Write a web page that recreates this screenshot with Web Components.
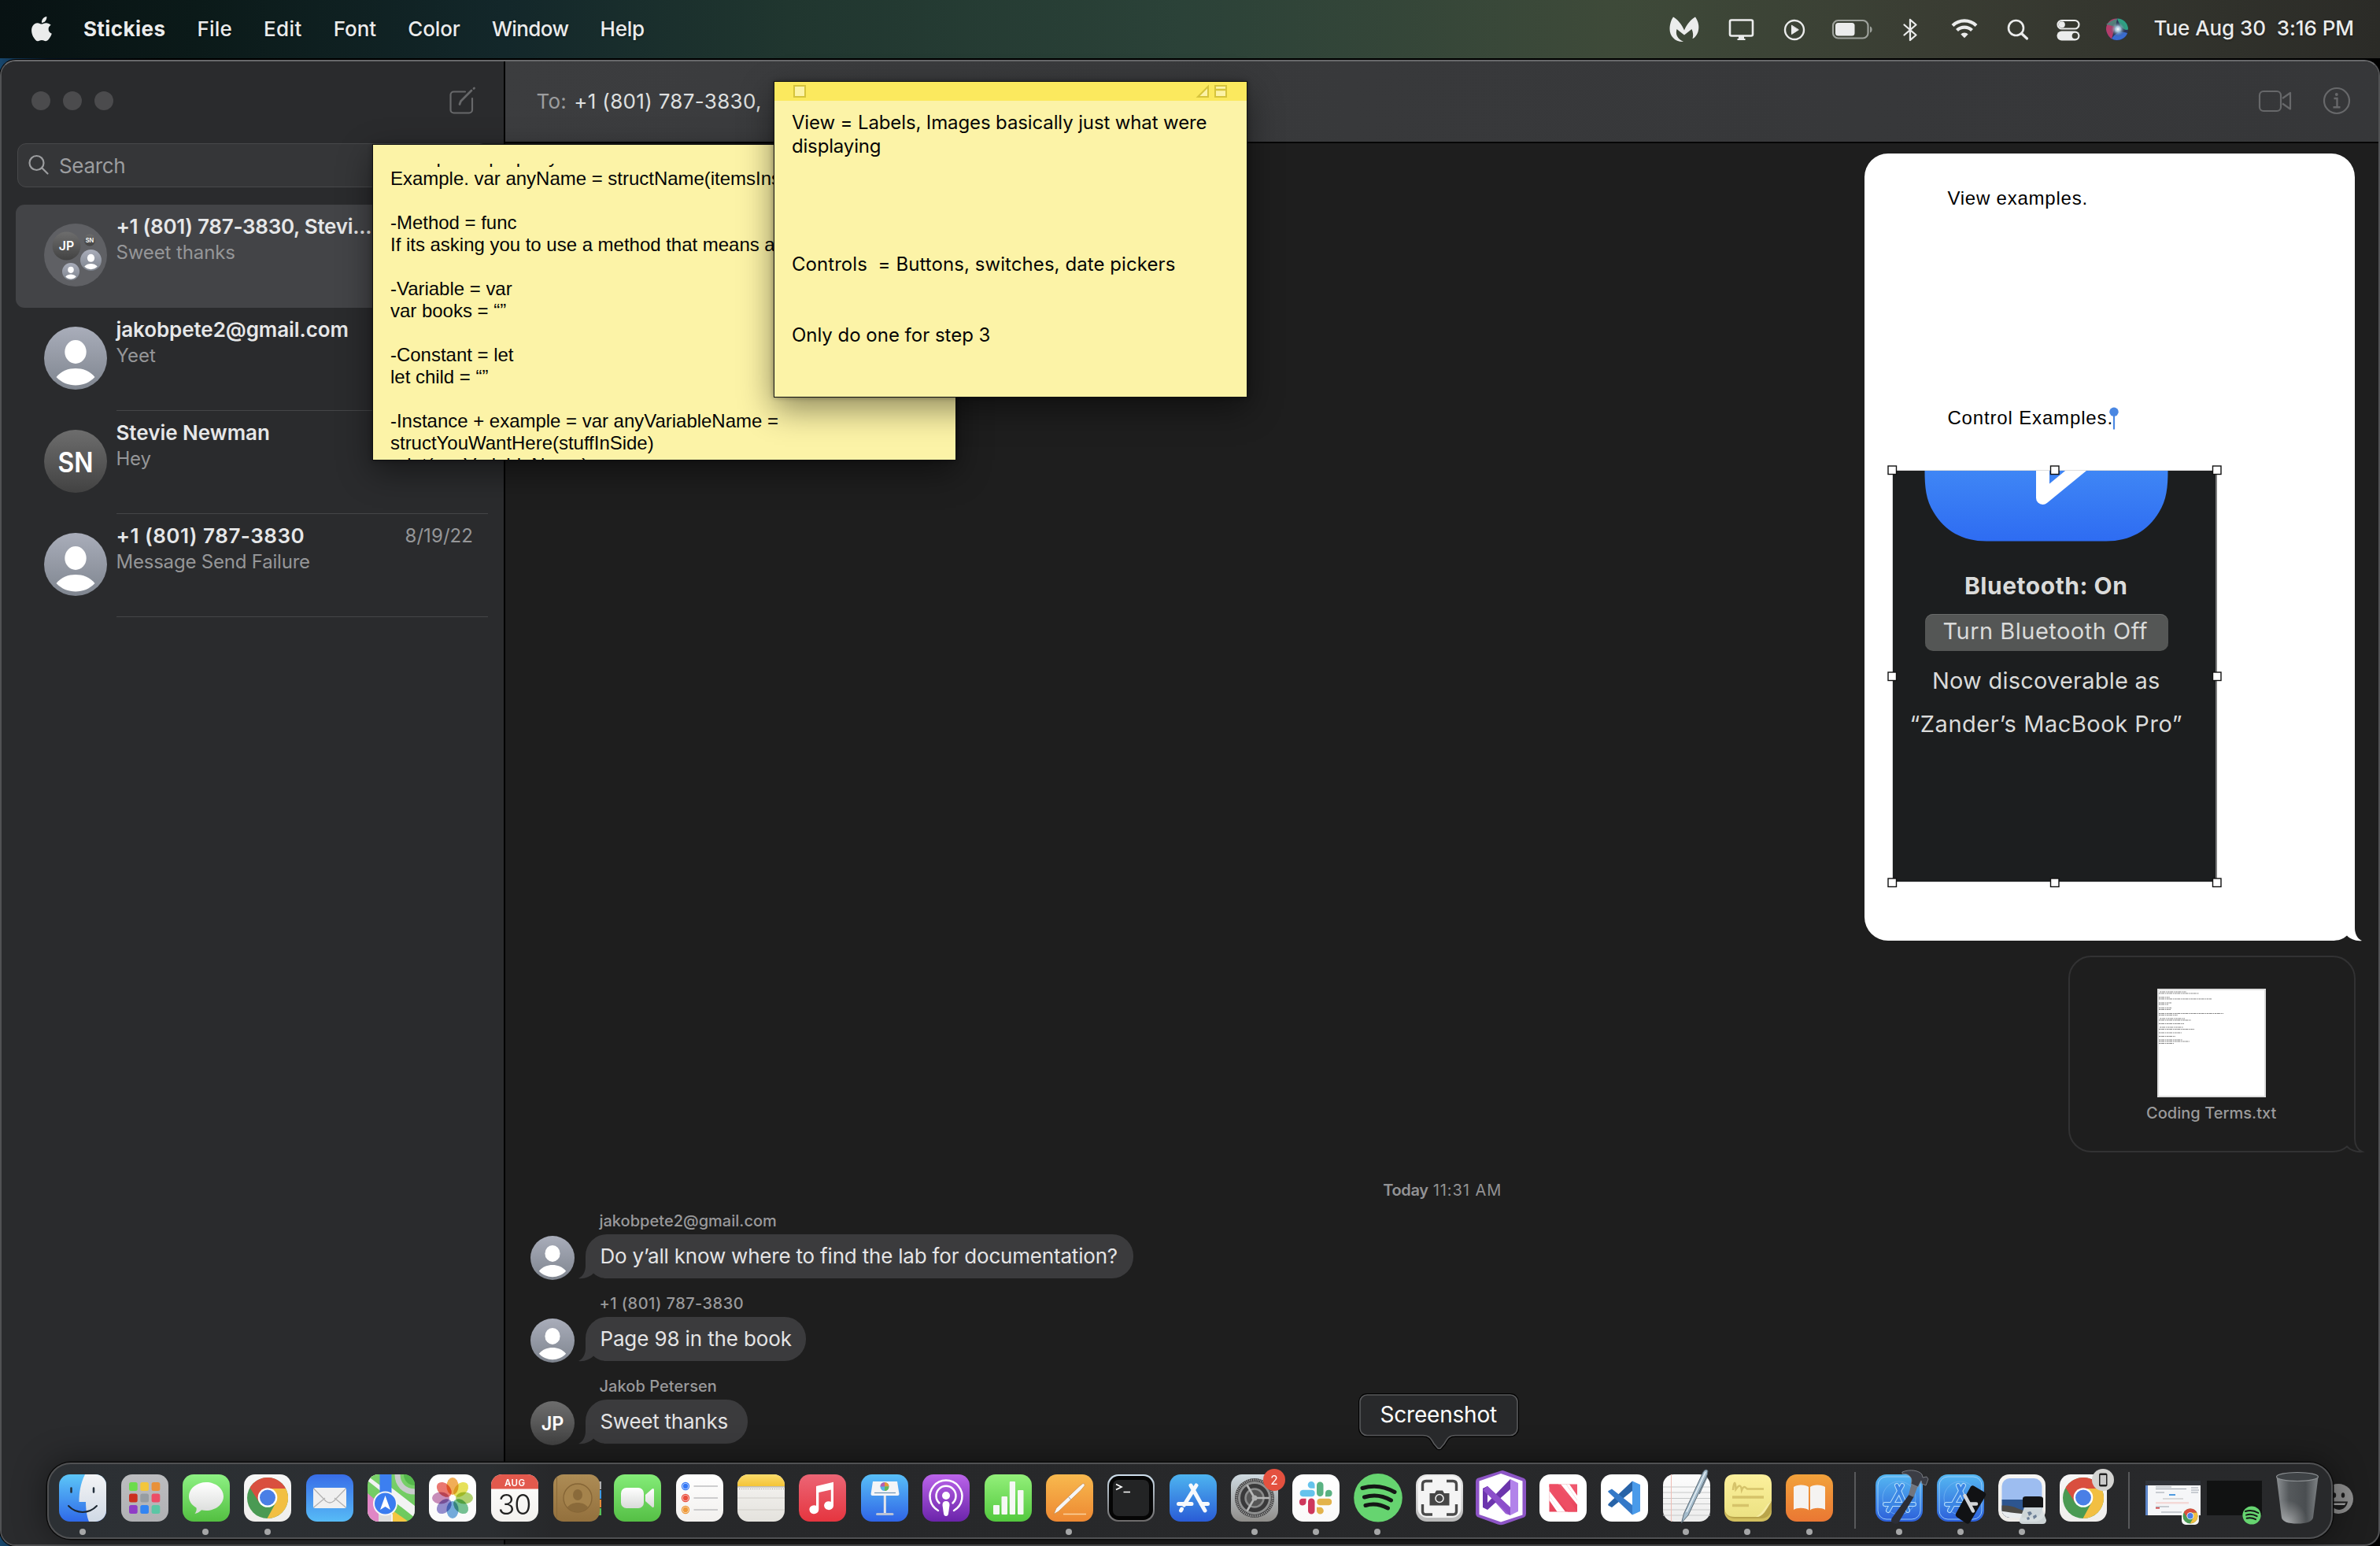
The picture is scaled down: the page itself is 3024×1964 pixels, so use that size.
<!DOCTYPE html>
<html lang="en">
<head>
<meta charset="utf-8">
<title>Desktop</title>
<style>
html,body{margin:0;padding:0;background:#000}
body{width:3024px;height:1964px;overflow:hidden;font-family:Inter,"Liberation Sans",sans-serif;-webkit-font-smoothing:antialiased}
</style>
</head>
<body>
<mac-desktop>
  <menu-bar slot="menubar"></menu-bar>
  <messages-window slot="window">
    <chat-sidebar slot="sidebar">
      <chat-cell kind="group" w="322" selected title-text="+1 (801) 787-3830, Stevi..." sub="Sweet thanks" sw="149"></chat-cell>
      <chat-cell kind="person" w="293" title-text="jakobpete2@gmail.com" sub="Yeet" sw="48"></chat-cell>
      <chat-cell kind="SN" w="193" title-text="Stevie Newman" sub="Hey" sw="42"></chat-cell>
      <chat-cell kind="person" w="237" title-text="+1 (801) 787-3830" sub="Message Send Failure" sw="244" date="8/19/22"></chat-cell>
    </chat-sidebar>
    <chat-toolbar slot="toolbar"></chat-toolbar>
    <chat-bubble slot="chat" class="doc" w="623" h="1000" r="30" side="right" fill="#fff"><doc-shot></doc-shot></chat-bubble>
    <chat-bubble slot="chat" class="file" w="363" h="248" r="28" side="right" fill="none" line="#323233"><file-card></file-card></chat-bubble>
    <time-stamp slot="chat"></time-stamp>
    <chat-message slot="chat" from="jakobpete2@gmail.com" fw="223" kind="person" w="696" tw="655">Do y’all know where to find the lab for documentation?</chat-message>
    <chat-message slot="chat" from="+1 (801) 787-3830" fw="181" kind="person" w="280" tw="241">Page 98 in the book</chat-message>
    <chat-message slot="chat" from="Jakob Petersen" fw="147" kind="JP" w="206" tw="160">Sweet thanks</chat-message>
  </messages-window>
  <sticky-note slot="over" class="back"><div class="lines"><div>-Computed property = Var or let</div><div>Example. var anyName = structName(itemsInside)</div><br><div>-Method = func</div><div>If its asking you to use a method that means a</div><br><div>-Variable = var</div><div>var books = “”</div><br><div>-Constant = let</div><div>let child = “”</div><br><div>-Instance + example = var anyVariableName =</div><div>structYouWantHere(stuffInSide)</div><div>print(anyVariableName)</div></div></sticky-note>
  <sticky-note slot="over" class="front" bar><fit-text w="525">View = Labels, Images basically just what were</fit-text><fit-text w="111">displaying</fit-text><p></p><p></p><p></p><p></p><fit-text w="485">Controls  = Buttons, switches, date pickers</fit-text><p></p><p></p><fit-text w="250">Only do one for step 3</fit-text></sticky-note>
  <hover-label slot="over">Screenshot</hover-label>
  <mac-dock slot="over"></mac-dock>
</mac-desktop>

<script>
const BASE = `:host,*{box-sizing:border-box}svg{display:block;flex:none;overflow:visible}`;
const make = (name, html, after) => customElements.define(name, class extends HTMLElement {
  connectedCallback() {
    if (this.shadowRoot) return;
    const root = this.attachShadow({mode: 'open'});
    root.innerHTML = typeof html === 'function' ? html(this) : html;
    if (after) after(this, root);
  }
});
const at = (el, n) => el.getAttribute(n);

/* Text run whose tracking is tuned so that it fills a given width */
const runs = [];
const fitRun = el => {
  const n = [...el.textContent].length, nat = el.getBoundingClientRect().width;
  el.style.letterSpacing = ((+at(el, 'w') + 2.5 - nat) / n).toFixed(3) + 'px';
};
make('fit-text', `<style>:host{display:block;width:max-content;white-space:pre;flex:none;margin-left:-.6px}</style><slot></slot>`, el => runs.push(el));

const person = `<defs><linearGradient id="p" x2="0" y2="1"><stop stop-color="#a9adba"/><stop offset="1" stop-color="#7f858f"/></linearGradient></defs><circle cx="40" cy="40" r="40" fill="url(#p)"/><ellipse cx="40" cy="32" rx="13.7" ry="15" fill="#fff"/><path d="M15.5 64C22 56 31 53 40 53S58 56 64.5 64C58 71 49 74.5 40 74.5S22 71 15.5 64Z" fill="#fff"/>`;
const mono = (t, fs, tl, y, id='m') => `<defs><linearGradient id="${id}" x2="0" y2="1"><stop stop-color="#6d6d6d"/><stop offset="1" stop-color="#424242"/></linearGradient></defs><circle cx="40" cy="40" r="40" fill="url(#${id})"/><text x="40" y="${y}" text-anchor="middle" font-size="${fs}" font-weight="600" fill="#fff" textLength="${tl}" lengthAdjust="spacingAndGlyphs">${t}</text>`;
make('user-avatar', el => {
  const k = at(el, 'kind'), s = at(el, 'size');
  const body = k === 'person' ? person
    : k === 'group' ? `<circle cx="40" cy="40" r="40" fill="#5f6064"/>
      <g transform="translate(10.5 10.5) scale(.45)">${mono('JP', 36, 43, 53)}</g>
      <g transform="translate(50.5 13.5) scale(.1875)">${mono('SN', 42, 56, 55, 'm2')}</g>
      <g transform="translate(46 33) scale(.3375)">${person}</g><g transform="translate(23 50) scale(.275)">${person}</g>`
    : k === 'SN' ? mono('SN', 35, 45, 54) : mono('JP', 34, 41, 53.5);
  return `<style>${BASE}:host{display:block;flex:none}</style><svg width="${s}" height="${s}" viewBox="0 0 80 80">${body}</svg>`;
});

make('mac-desktop', `<style>${BASE}:host{display:flex;flex-direction:column;position:relative;width:3024px;height:1964px;overflow:hidden;background:linear-gradient(90deg,#17466c 0,#061422 60px,#000 200px)}</style>
<slot name="menubar"></slot><slot name="window"></slot><slot name="over"></slot>`);

/* Menu bar */
const ic = (x, w, ml, body) => `<svg style="margin-left:${ml}px" width="${w}" height="38" viewBox="${x} 18 ${w} 38" fill="none" stroke-linecap="round" stroke-linejoin="round">${body}</svg>`;
make('menu-bar', `<style>${BASE}
:host{display:flex;align-items:center;height:74px;margin-bottom:2px;flex:none;padding:0 33px 0 39px;color:#ebecec;font-size:26px;line-height:32px;
background:linear-gradient(90deg,#081213 0,#0b1a19 250px,#13272a 640px,#20362f 1000px,#2b4238 1500px,#3e4a39 2050px,#3a3d33 2450px,#2b2b27 3024px);text-shadow:0 1px 3px #0006}
b{font-weight:700}.m{display:flex;gap:40.700px;margin-left:39.500px;margin-top:-1px;font-weight:500}.s{flex:1}.t{font-weight:500;margin:-2px 0 0 32px}</style>
<svg width="28" height="34" viewBox="39 18 28 34" fill="#ebecec"><path d="M59.3 19c.3 2.300-.5 4.200-1.700 5.700-1.200 1.400-3 2.300-4.600 2.200-.3-2.100.6-4.100 1.700-5.400C55.900 20.100 57.800 19.200 59.300 19zM64.700 29.700c-2 1.200-3.100 2.900-3.100 5.200 0 2.700 1.500 4.700 4.200 5.800-.7 2.100-1.600 3.900-2.800 5.600-1.400 2-2.700 3.900-4.900 3.900-2.100 0-2.700-1.200-5-1.200s-3 1.200-5 1.300c-2.100.1-3.500-2-4.900-4-2.700-4-4.500-10.600-1.700-15.300 1.300-2.300 3.700-3.700 6.200-3.800 2.100 0 3.800 1.400 5.100 1.400 1.200 0 3.500-1.600 6-1.400 1.900.1 4.200.8 5.900 2.500z"/></svg>
<div class="m"><b><fit-text w="102">Stickies</fit-text></b><fit-text w="42">File</fit-text><fit-text w="46">Edit</fit-text><fit-text w="52">Font</fit-text><fit-text w="64">Color</fit-text><fit-text w="95">Window</fit-text><fit-text w="54">Help</fit-text></div>
<div class="s"></div>
${ic(2121,38,0,`<path fill="#ebecec" d="M2126 21.500C2131 24 2137 31 2140 38.500C2143 31 2149 24 2154 21.500C2158 27 2159.500 34 2157.500 40.500C2155.500 46.500 2151.500 49 2150.500 49C2151.500 46 2151.500 41 2149.500 37L2140 44.500L2130.500 37C2128.500 44 2131.500 49.500 2139 53C2128 53.500 2121.500 45.500 2121.500 37C2121.500 31 2123.500 25 2126 21.500Z"/>`)}
${ic(2196,33,37,`<rect x="2198" y="25.500" width="29" height="20" rx="2" stroke="#ebecec" stroke-width="2.600"/><path d="M2209 46h7v3h1.500v2h-10v-2h1.500z" fill="#ebecec"/>`)}
${ic(2266,28,37,`<circle cx="2280" cy="38" r="12" stroke="#ebecec" stroke-width="2.400"/><path d="M2276.500 32.500v11l8.500-5.500z" fill="#ebecec" stroke="#ebecec"/>`)}
${ic(2327,53,33,`<rect x="2329" y="26" width="44.500" height="22.500" rx="6.500" stroke="#9da19b" stroke-width="2.200"/><path d="M2376 33.500c3.500 1 3.500 7 0 8z" fill="#9da19b"/><rect x="2332" y="29" width="24.500" height="16.500" rx="3.500" fill="#ebecec"/>`)}
${ic(2417,20,37,`<path d="M2419.500 31.500L2434.500 44.500L2427 51V25L2434.500 31.500L2419.500 44.500" stroke="#ebecec" stroke-width="2.300"/>`)}
${ic(2478,36,41,`<path d="M2481 32.500a21.500 21.500 0 0 1 30 0M2486.500 38.500a13.500 13.500 0 0 1 19 0" stroke="#ebecec" stroke-width="4.200" stroke-linecap="butt"/><path d="M2496 48.300l-4.700-4.900a6.700 6.700 0 0 1 9.400 0z" fill="#ebecec"/>`)}
${ic(2550,28,36,`<circle cx="2561.500" cy="35.500" r="9.500" stroke="#ebecec" stroke-width="2.600"/><path d="M2568.500 42.500L2575.500 49" stroke="#ebecec" stroke-width="3.200"/>`)}
${ic(2612,31,34,`<rect x="2614.500" y="26" width="27" height="10.500" rx="5.250" stroke="#ebecec" stroke-width="2.200"/><circle cx="2619.800" cy="31.200" r="4" fill="#ebecec"/><rect x="2613.500" y="39.500" width="29" height="12" rx="6" fill="#ebecec"/><circle cx="2636.500" cy="45.500" r="3.800" fill="#3b3d34"/>`)}
${ic(2675,30,32,`<defs><radialGradient id="a"><stop stop-color="#fff"/><stop offset=".35" stop-color="#bfe2f5" stop-opacity=".8"/><stop offset="1" stop-color="#345" stop-opacity="0"/></radialGradient></defs><circle cx="2690" cy="37.500" r="14" fill="#2a3557"/><path d="M2690 23.500a14 14 0 0 1 14 14c-5 2-10-3-14-14z" fill="#2fa083"/><path d="M2690 23.500c-9 0-14 6-14 14 1 7 5 10 7 12 3-8 3-15 7-26z" fill="#b43d6a"/><path d="M2683 49c5 4 17 2 20-7-7-3-14-2-20 7z" fill="#3a6cd0"/><path d="M2676 31q8-6 14-7l-2 10z" fill="#547f7a"/><circle cx="2691" cy="37" r="10" fill="url(#a)"/>`)}
<fit-text class="t" w="252">Tue Aug 30  3:16 PM</fit-text>`);

/* Messages window */
make('messages-window', `<style>${BASE}
:host{display:flex;flex:1;min-height:0;border:2px solid #515254;border-top-color:#68696b;border-radius:20px;overflow:hidden;background:#1e1e1e;box-shadow:0 0 0 1px #000}
.main{flex:1;display:flex;flex-direction:column;border-left:2px solid #000}
.chat{flex:1;display:flex;flex-direction:column;padding:13px 0 0 32px}
::slotted(.doc){align-self:flex-end;margin-right:30px}
::slotted(.file){align-self:flex-end;margin:20px 30.500px 0 0}
</style><slot name="sidebar"></slot><div class="main"><slot name="toolbar"></slot><div class="chat"><slot name="chat"></slot></div></div>`);

make('chat-sidebar', `<style>${BASE}
:host{display:flex;flex-direction:column;width:638px;background:#2a2b2d;flex:none}
.h{display:flex;align-items:center;height:104px;padding:0 35px 4px 38px;gap:16px}i{width:24px;height:24px;border-radius:50%;background:#4b4b4d}.sp{flex:1}
.q{display:flex;align-items:center;height:56px;margin:0 20px 22px 20px;padding:0 15px 0 13px;border:1.500px solid #48494b;border-radius:11px;background:#353638;color:#9c9d9f;font-size:26px;gap:13.500px}
.q fit-text{margin-top:1px}
</style><div class="h"><i></i><i></i><i></i><div class="sp"></div><svg width="34" height="34" viewBox="571 109 34 34" fill="none" stroke="#67686a" stroke-width="2.200" stroke-linecap="round"><path d="M591 114.500H576.500a4 4 0 0 0-4 4v19a4 4 0 0 0 4 4H596a4 4 0 0 0 4-4V123"/><path d="M584 130.500l1.500-4 13.500-13.500M602 110.500l.5-.5" stroke-width="2.800"/></svg></div>
<div class="q"><svg width="26" height="28" viewBox="37 197 26 28" fill="none" stroke="#9c9d9f" stroke-width="2.200" stroke-linecap="round"><circle cx="47.500" cy="208" r="9"/><path d="M54.500 214.500L61.500 221.500"/></svg><fit-text w="82">Search</fit-text></div><slot></slot>`);

make('chat-cell', el => `<style>${BASE}
:host{display:block;height:131px;margin:0 20px 0 18px}
.c{display:flex;height:131px;padding:0 0 0 36px;gap:12px;border-radius:11px;${el.hasAttribute('selected') ? 'background:#434447' : ''}}
user-avatar{margin-top:24px}.b{flex:1;padding-top:12px;position:relative;line-height:32px;${el.hasAttribute('selected') ? '' : 'border-bottom:1.500px solid #444547'}}
.r{display:flex;justify-content:space-between;padding-right:19px;color:#e6e7e8;font-size:26px;font-weight:600}
.s,.d{color:#959698;font-size:24px;font-weight:400}.s{padding-top:1px}</style>
<div class="c"><user-avatar kind="${at(el,'kind')}" size="80"></user-avatar><div class="b"><div class="r"><fit-text w="${at(el,'w')}">${at(el,'title-text')}</fit-text>${at(el,'date') ? `<fit-text class="d" w="84">${at(el,'date')}</fit-text>` : ''}</div><div class="s"><fit-text w="${at(el,'sw')}">${at(el,'sub')}</fit-text></div></div></div>`);

make('chat-toolbar', `<style>${BASE}
:host{display:flex;align-items:center;height:104px;flex:none;background:linear-gradient(90deg,#3c3d3f,#38393b 45%,#363739);border-bottom:2px solid #060606;padding:0 35px 2px 40px;font-size:26px;color:#dfe0e0;line-height:32px}
span{color:#9c9d9e;margin-right:10px}.sp{flex:1}svg{margin-left:40px}fit-text{padding-top:2px}</style>
<span><fit-text w="36">To:</fit-text></span><fit-text w="236">+1 (801) 787-3830,</fit-text><div class="sp"></div>
<svg width="42" height="34" viewBox="2870 111 42 34" fill="none" stroke="#67686a" stroke-width="2.200" stroke-linejoin="round"><rect x="2872" y="116" width="27" height="25" rx="5"/><path d="M2901 125L2911 118V138.500L2901 131.500"/></svg>
<svg width="36" height="36" viewBox="2951.500 110 36 36" fill="none" stroke="#67686a" stroke-width="2.200"><circle cx="2969.500" cy="128" r="16"/><path d="M2966 125h4v11M2965 136.300h9" stroke-width="2.400"/><circle cx="2969.300" cy="120" r="2" fill="#67686a" stroke="none"/></svg>`);

/* Speech bubble outline with a tail on one side */
const bubble = (w, h, r) => `M${r} 0H${w-r}A${r} ${r} 0 0 1 ${w} ${r}V${h-16}C${w} ${h-8} ${w+4} ${h-2} ${w+9} ${h}C${w+2} ${h+1} ${w-6} ${h-2} ${w-10} ${h-6.5}C${w-15} ${h-2} ${w-20} ${h} ${w-r} ${h}H${r}A${r} ${r} 0 0 1 0 ${h-r}V${r}A${r} ${r} 0 0 1 ${r} 0Z`;
make('chat-bubble', el => {
  const w = +at(el,'w'), h = +at(el,'h'), r = +at(el,'r'), line = at(el,'line');
  return `<style>${BASE}:host{display:block;position:relative;width:${w}px;height:${h}px;flex:none}.bg{position:absolute;left:0;top:0}.in{position:relative;height:100%}</style>
  <svg class="bg" width="${w}" height="${h}"><path d="${bubble(w,h,r)}" fill="${at(el,'fill')}" ${line ? `stroke="${line}" stroke-width="2"` : ''} ${at(el,'side') === 'left' ? `transform="translate(${w} 0) scale(-1 1)"` : ''}/></svg><div class="in"><slot></slot></div>`;
});

const handle = (x, y) => `<rect x="${x-5}" y="${y-5}" width="10.500" height="10.500" fill="#fff" stroke="#111" stroke-width="1.400"/>`;
make('doc-shot', `<style>${BASE}
:host{display:block;padding-top:42.500px;color:#000;font:24px/28px "Liberation Sans",sans-serif}
.l{margin-left:106px;display:flex}.two{margin-top:251px}
.shot{position:relative;display:flex;flex-direction:column;align-items:center;width:413px;height:524px;margin:50px 0 0 35px;background:#1c1e1f;color:#dadbda;font:29px/36px Inter,sans-serif;padding-right:21px}
.shot svg{position:absolute;left:0;top:0}.pin{margin-left:-5px;margin-top:0}
.a{margin-top:129px;font-weight:700;font-size:30px}.btn{display:flex;align-items:center;justify-content:center;width:309px;height:47px;margin:18px 0 0 1px;border-radius:10px;background:#545655;box-shadow:inset 0 1px #686a69;padding:0 3px 2px 0}
.b{margin-top:20px}.c{margin-top:19.500px}</style>
<div class="l"><fit-text w="176">View examples.</fit-text></div>
<div class="l two"><fit-text w="208">Control Examples.</fit-text><svg class="pin" width="12" height="30" viewBox="0 0 12 30"><path d="M6 5V28.500" stroke="#4a87e2" stroke-width="2.200"/><circle cx="6" cy="6.200" r="5.700" fill="#4a87e2"/></svg></div>
<div class="shot"><svg width="412.500" height="524" viewBox="0 0 412.500 524"><defs><linearGradient id="g" x2="0" y2="1"><stop stop-color="#3f86f5"/><stop offset="1" stop-color="#2e6cf2"/></linearGradient><clipPath id="c"><path d="M0 0H412V524H0Z"/></clipPath></defs><path d="M41.500 0H350.500C350.500 22 349 38 339 54C325 77 303 90.500 272 90.500H120C89 90.500 67 77 53 54C43 38 41.500 22 41.500 0Z" fill="url(#g)"/><path clip-path="url(#c)" d="M191.500 -10V35.500L250 -12.500" fill="none" stroke="#fff" stroke-width="17" stroke-linejoin="round"/>
<rect x=".5" y=".5" width="411.500" height="523" fill="none" stroke="#ddd" stroke-width="1"/>${[[0,0],[206.500,0],[412.500,0],[0,262],[412.500,262],[0,524],[206.500,524],[412.500,524]].map(p => handle(...p)).join('')}</svg>
<fit-text class="a" w="205">Bluetooth: On</fit-text><div class="btn"><fit-text w="258">Turn Bluetooth Off</fit-text></div><fit-text class="b" w="287">Now discoverable as</fit-text><fit-text class="c" w="344">“Zander’s MacBook Pro”</fit-text></div>`);

const rows = [[1,34,2],[0,51,4],[0,14,9],[0,67,11],[0,16,16],[0,12,18],[0,16,22.500],[0,15,24.500],[0,82,29.500],[0,24,31.500],[1,32,36],[0,41,38],[0,32,42.500],[1,30,47],[0,45,49.500],[0,29,54],[0,21,58.500],[0,30,63],[0,39,65],[0,19,67.500]];
make('file-card', `<style>${BASE}
:host{display:flex;flex-direction:column;align-items:center;padding:41px 0 0 0;color:#9a9a9b;font-size:20px;line-height:24px;font-weight:500}
.t{width:138px;height:138px;background:#fff;border:2px solid #dedede;margin-bottom:7.500px}</style>
<div class="t"><svg width="134" height="134">${rows.map(([x,w,y]) => `<path d="M${x} ${y}h${w}" stroke="#888" stroke-width="1.100" stroke-dasharray="2.500 .6 4 .8 1.500 .7"/>`).join('')}</svg></div><fit-text w="163">Coding Terms.txt</fit-text>`);

make('time-stamp', `<style>:host{display:flex;justify-content:center;margin:36.500px 0 0 -30px;color:#929294;font-size:20px;line-height:24px;flex:none}b{font-weight:600}</style><b><fit-text w="55">Today</fit-text></b><fit-text w="85" style="margin-left:6px">11:31 AM</fit-text>`);

make('chat-message', el => `<style>${BASE}
:host{display:block;height:105px;flex:none;padding-top:15px}
.f{margin-left:88px;color:#99999b;font-size:20px;line-height:24px;font-weight:500}
.r{display:flex;margin-top:5px;gap:14px;align-items:flex-start}user-avatar{margin-top:2px}
.x{padding:11px 0 0 19px;font-size:26px;line-height:34px;color:#e4e4e5}</style>
<div class="f"><fit-text w="${at(el,'fw')}">${at(el,'from')}</fit-text></div>
<div class="r"><user-avatar kind="${at(el,'kind')}" size="56"></user-avatar><chat-bubble side="left" w="${at(el,'w')}" h="56" r="27" fill="#3b3b3d"><div class="x"><fit-text w="${at(el,'tw')}">${el.textContent}</fit-text></div></chat-bubble></div>`);

/* Sticky notes */
make('sticky-note', el => `<style>${BASE}
:host{position:absolute;display:flex;flex-direction:column;background:#fcf3a7;border:1px solid #111;color:#050505;box-shadow:0 14px 40px #00000073,0 0 6px #0005;overflow:hidden;z-index:1}
:host(.back){left:473px;top:183px;width:742px;height:402px;font:24px/28px "Liberation Sans",sans-serif;padding:24px 0 0 22px}
:host(.front){left:983px;top:103px;width:602px;height:402px;font-size:24px;line-height:30px}
.clip{overflow:hidden;flex:1;min-height:0}.bar{height:24px;background:#fbe95e;display:flex;align-items:center;padding:0 24px;flex:none}.sp{flex:1}
::slotted(.lines){margin-top:-23px;white-space:pre;letter-spacing:-.02px}::slotted(p){margin:0;height:30px}
:host(.front) .clip{padding:13px 0 0 22.500px}</style>
${el.hasAttribute('bar') ? `<div class="bar"><svg width="16" height="16"><rect x="1" y="1" width="14" height="14" fill="#fcf3a7" stroke="#d6c43c" stroke-width="2"/></svg><div class="sp"></div><svg width="40" height="16" fill="#fcf3a7" stroke="#d6c43c" stroke-width="2"><path d="M2 15H15V2Z"/><rect x="24" y="1" width="14" height="14"/><path d="M24 6H38" stroke-width="2.500"/></svg></div>` : ''}<div class="clip"><slot></slot></div>`);

make('hover-label', el => `<style>${BASE}
:host{position:absolute;left:1726px;top:1770px;width:204px;height:71px;z-index:2;display:flex;justify-content:center;color:#fff;font-size:28px;line-height:55px}
svg{position:absolute;left:0;top:0}fit-text{position:relative}</style>
<svg width="204" height="71" viewBox="0 0 202 71" preserveAspectRatio="none"><path d="M11 2H191a9 9 0 0 1 9 9V44.500a9 9 0 0 1-9 9H122C114 53.500 112 57 108 64L103.500 69.500Q101.500 71 99.500 69.500L95 64C91 57 89 53.500 81 53.500H11a9 9 0 0 1-9-9V11a9 9 0 0 1 9-9Z" fill="#28292b" stroke="#000" stroke-width="4"/><path d="M11 2H191a9 9 0 0 1 9 9V44.500a9 9 0 0 1-9 9H122C114 53.500 112 57 108 64L103.500 69.500Q101.500 71 99.500 69.500L95 64C91 57 89 53.500 81 53.500H11a9 9 0 0 1-9-9V11a9 9 0 0 1 9-9Z" fill="#28292b" stroke="#58595b" stroke-width="1.600"/></svg><fit-text w="146">${el.textContent}</fit-text>`);

/* Dock icons, each drawn in a 60 × 60 box */
const lg = (id, a, b) => `<linearGradient id="${id}" x2="0" y2="1"><stop stop-color="${a}"/><stop offset="1" stop-color="${b}"/></linearGradient>`;
const tile = (a, b = a) => `<defs>${lg('t', a, b)}${lg('w', '#fff', '#d9dbd9')}<clipPath id="k"><rect width="60" height="60" rx="14"/></clipPath></defs><rect width="60" height="60" rx="14" fill="url(#t)"/>`;
const chromeDisc = `<circle cx="30" cy="30" r="26" fill="#4a9a53"/><path d="M30 18H53.100A26 26 0 0 1 29.500 56L40.400 36Z" fill="#f2bf42"/><path d="M19.600 36L7.500 17A26 26 0 0 1 53.100 18H30Z" fill="#d94f3f"/><circle cx="30" cy="29.500" r="12.300" fill="#fff"/><circle cx="30" cy="29.500" r="10" fill="#4a7fe6"/>`;
const spot = `<path d="M10 17.500C23 13.500 38 15 51 22.500M12.500 29C24 25.500 36 27 46.500 33M14 39.500C24 36.500 33 38 42.500 43" fill="none" stroke="#141615" stroke-linecap="round"`;
const xgrid = `<rect x="3" y="3" width="54" height="54" rx="11" fill="none" stroke="#9fd2fa" stroke-width=".9"/><circle cx="30" cy="30" r="21" fill="none" stroke="#7fbcf5" stroke-width=".6"/><g fill="none" stroke="#b7defb" stroke-linecap="round" stroke-width="6"><path d="M27 14L41 46M34 14L16 46M12 38H49"/></g><g fill="none" stroke="#3c86e4" stroke-linecap="round" stroke-width="4"><path d="M27 14L41 46M34 14L16 46M12 38H49"/></g>`;
const petals = ['#f0a23b','#e3de40','#a5cc5a','#62ba84','#5f9fd9','#857dc8','#c27bb0','#e8625a'];
const icons = {
finder: `${tile('#5cc6f8','#2f69e8')}<defs>${lg('f','#f3f4f6','#d0d9e5')}</defs><g clip-path="url(#k)"><path d="M33 0C27 12 25.500 24 25.500 35H34C34 45 35.500 54 38 60H60V0Z" fill="url(#f)"/></g><path d="M15.500 17.500V22.500M44 17.500V22.500" stroke="#23303c" stroke-width="2.500" stroke-linecap="round"/><path d="M12 40C22 50.500 38 50.500 48 40" fill="none" stroke="#1d2730" stroke-width="2" stroke-linecap="round"/>`,
launch: `${tile('#bcbdc0','#b0b1b4')}${['#6cdc4c','#f3c63c','#e8913a','#cc3020','#979da2','#ec4d67','#8f3cc6','#3385f2','#5bc6a5'].map((c,i) => `<rect x="${10+(i%3)*14.3}" y="${10+(i/3|0)*14.500}" width="10.700" height="11" rx="2.500" fill="${c}"/>`).join('')}`,
messages: `${tile('#8df183','#53bf41')}<path d="M30 10C42 10 52 18 52 28S42 46 30 46C28 46 26 45.800 24 45.300C22 47.500 19 49.500 15.500 50C17.500 47.500 18 45 17.500 42.500C11.500 39 8 34 8 28C8 18 18 10 30 10Z" fill="url(#w)"/>`,
chrome: `${tile('#f7f7f7','#efeeec')}${chromeDisc}`,
mail: `${tile('#386de8','#57bbf6')}<rect x="9" y="17" width="42" height="26" rx="2.500" fill="#f0f0f0"/><path d="M9.500 42L24 30M50.500 42L36 30M9.500 18L25 34Q30 38 35 34L50.500 18" fill="none" stroke="#b3b3b3" stroke-width="1.300"/>`,
maps: `${tile('#78d069','#6cc95d')}<g clip-path="url(#k)"><path d="M0 26L60 72V96H0Z" fill="#f3f4f4"/><path d="M0 24V60H14V36Z" fill="#e086c5"/><path d="M0 8L60 55V40L16 6V0H0Z" fill="#f2f3f3"/><path d="M0 0H16V14L0 2Z" fill="#78d069"/><path d="M32 60V46L52 60Z" fill="#f4c642"/><rect x="15.500" width="15" height="36" fill="#3c7ff0"/><path d="M38 0C38 12 46 22 60 22" fill="none" stroke="#c9cccd" stroke-width="7"/><path d="M46 0C46 8 52 14 60 14V0Z" fill="#55b84c"/><rect x="14" y="40" width="16" height="20" fill="#ddd"/></g><circle cx="22.500" cy="37" r="14.500" fill="#3a7cf0" stroke="#f5f5f5" stroke-width="2"/><path d="M22.500 27L29 45L22.500 41L16 45Z" fill="#fff"/>`,
photos: `${tile('#fff','#fafafa')}${petals.map((c,i) => `<ellipse cx="30" cy="15" rx="7.600" ry="11" fill="${c}" opacity=".86" style="mix-blend-mode:multiply" transform="rotate(${i*45} 30 30)"/>`).join('')}`,
calendar: `${tile('#fff','#f3f1ee')}<path clip-path="url(#k)" d="M0 0H60V18.500H0Z" fill="#e2594d"/><text x="30" y="14.500" text-anchor="middle" font-size="11.500" font-weight="600" fill="#fff" textLength="26">AUG</text><text x="30" y="50.500" text-anchor="middle" font-size="36" font-weight="300" fill="#222" textLength="43">30</text>`,
contacts: `<defs>${lg('t','#ad8c55','#93703d')}</defs><path d="M58 9h4v10h-4z" fill="#b0b0b0"/><path d="M58 20h4v11h-4z" fill="#3f9be6"/><path d="M58 32h4v10h-4z" fill="#e58a3a"/><path d="M58 43h4v9h-4z" fill="#57c357"/><rect x="1" width="59" height="60" rx="13" fill="url(#t)"/><path d="M5.500 4V56" stroke="#8a6a39" stroke-width="1"/><circle cx="32" cy="30" r="18" fill="#a5834c" stroke="#856536" stroke-width="1.300"/><ellipse cx="32" cy="26" rx="6" ry="7" fill="#8a6a3a"/><path d="M19 42C24 34 40 34 45 42C39 49.500 25 49.500 19 42Z" fill="#8a6a3a"/>`,
facetime: `${tile('#84ec78','#55bf45')}<rect x="9" y="17" width="29" height="26" rx="7" fill="url(#w)"/><path d="M40 26L48.500 18.500Q51 17 51 20V40Q51 43 48.500 41.500L40 34Z" fill="url(#w)"/>`,
reminders: `${tile('#fff','#f2f0ee')}${['#3478f6','#ea4e3d','#ef9836'].map((c,i) => `<circle cx="12" cy="${15+i*15}" r="4.500" fill="none" stroke="${c}" stroke-width="1.300"/><circle cx="12" cy="${15+i*15}" r="3.200" fill="${c}"/><path d="M22.500 ${15+i*15}H53" stroke="#bfbfc0" stroke-width="1.500"/>`).join('')}`,
notes: `${tile('#f6f5f3','#e4e2dd')}<defs>${lg('y','#fbdc6c','#f4c437')}</defs><path clip-path="url(#k)" d="M0 0H60V15H0Z" fill="url(#y)"/><path d="M0 15.800H60" stroke="#b0ada5" stroke-width="1.200"/><path d="M2 18.500H60" stroke="#999" stroke-width="1" stroke-dasharray="1 1.800"/><path d="M0 30H60M0 45H60" stroke="#cfcdc8" stroke-width="1.200"/>`,
music: `${tile('#ec6575','#e5353f')}<path d="M22 15L44 9.700V39.500A6 5.500 0 1 1 40.800 34.800V19.500L25.300 23V44.500A6 5.500 0 1 1 22 39.800Z" fill="#fff"/>`,
keynote: `${tile('#58bff8','#2f64e6')}<path d="M15 9H46L48.500 25Q48.500 27 46.500 27H14.500Q12.500 27 12.500 25Z" fill="#f4f5f7"/><path d="M17 23.500H44" stroke="#6f94b8" stroke-width="1.200"/><circle cx="30" cy="15.500" r="5.500" fill="#56b3e6"/><path d="M30 15.500V10A5.500 5.500 0 0 1 35.500 15.500Z" fill="#e7973a"/><path d="M30 15.500V21A5.500 5.500 0 0 0 35.500 15.500Z" fill="#67b957"/><path d="M30 15.500V10A5.500 5.500 0 0 0 24.500 15.500Z" fill="#b45fb0"/><path d="M30.300 27V50" stroke="#e4e6ea" stroke-width="3"/><path d="M20.500 50.500H40" stroke="#b9c2d6" stroke-width="3" stroke-linecap="round"/>`,
podcasts: `${tile('#bb64ea','#6b24aa')}<g fill="none" stroke="#fff" stroke-width="2.500" stroke-linecap="round"><path d="M20 46A20.500 20.500 0 1 1 40 46"/><path d="M21.500 36.500A12.500 12.500 0 1 1 38.500 36.500"/></g><circle cx="30" cy="27" r="5" fill="#fff"/><path d="M25.500 39Q25.500 34 30 34T34.500 39L33 50Q32.500 53 30 53T27 50Z" fill="#fff"/>`,
numbers: `${tile('#93f07a','#53c83e')}<g fill="#f5f8f4"><rect x="11" y="39" width="8" height="12" rx="1"/><rect x="21.500" y="28" width="7.500" height="23" rx="1"/><rect x="31.800" y="9" width="7.200" height="42" rx="1"/><rect x="42" y="20" width="7.500" height="31" rx="1"/></g>`,
pages: `${tile('#f8b94e','#ed8832')}<path d="M22 50.500H51" stroke="#fbd3a0" stroke-width="1.500"/><path d="M10 50.500L13 43L42 15.500L47 11.500Q50 11 49 14.500L44.500 20L16 47Z" fill="#f6f6f6" stroke="#c98740" stroke-width=".7"/><path d="M28.500 28.500L31.500 32" stroke="#999"/>`,
terminal: `<defs>${lg('t','#cfe0ee','#6c6a6a')}</defs><rect width="60" height="60" rx="14" fill="url(#t)"/><rect x="2" y="2" width="56" height="56" rx="12.500" fill="#050505"/><rect x="7" y="7" width="46" height="46" rx="7" fill="#232425"/><path d="M11 12.500L18 16L11 19.500M20.500 22.500H29" fill="none" stroke="#fff" stroke-width="1.700"/>`,
appstore: `${tile('#4db4f0','#2a5cd6')}<g stroke="#f7f9fc" stroke-width="5" stroke-linecap="round"><path d="M27 14L45 46M34 14L18.500 39M11.500 37.500H28M40 37.500H48.500M15.500 44L14.500 46"/></g>`,
settings: `${tile('#cfdae1','#8f8d8a')}<circle cx="30" cy="30" r="25" fill="#39393a"/><circle cx="30" cy="30" r="23" fill="none" stroke="#9b9b9b" stroke-width="3" stroke-dasharray="1.300 1.100"/><circle cx="30" cy="30" r="19.500" fill="none" stroke="#8f9090" stroke-width="3"/><circle cx="30" cy="30" r="11.500" fill="#555" stroke="#8a8b8b" stroke-width="2.500"/><path d="M30 30H49M30 30L20.500 13.500M30 30L20.500 46.500" stroke="#b7b8b8" stroke-width="2.600"/><circle cx="30" cy="30" r="3.500" fill="#b0b1b1"/><circle cx="55" cy="7" r="14" fill="#e4513f"/><text x="55" y="12.500" text-anchor="middle" font-size="15.500" fill="#fff">2</text>`,
slack: `${tile('#fff','#faf9f9')}<g transform="translate(0 .3)"><path d="M31 13.500A4.200 4.200 0 0 1 39.500 13.500V23.500A4.200 4.200 0 0 1 31 23.500ZM42 23.500A4.300 4.300 0 1 1 46.300 28H42Z" fill="#5ab282"/><path d="M13.300 19.500H25A4.300 4.300 0 0 1 25 28H13.300A4.300 4.300 0 0 1 13.300 19.500ZM28.500 17.500H24A4.400 4.400 0 1 1 28.500 13Z" fill="#65c3ec"/><path d="M20 34.500A4.200 4.200 0 0 1 28.500 34.500V46A4.200 4.200 0 0 1 20 46ZM17.500 30.500V35A4.300 4.300 0 1 1 13 30.500Z" fill="#ce375c"/><path d="M35 30.500H46.500A4.300 4.300 0 0 1 46.500 39H35A4.300 4.300 0 0 1 35 30.500ZM31 41.500H35.500A4.400 4.400 0 1 1 31 46Z" fill="#e3b34c"/></g>`,
spotify: `<circle cx="30" cy="29.700" r="30.800" fill="#66d470"/>${spot} stroke-width="5"/>`,
screenshot: `${tile('#e9e9e9','#b9b9b9')}<rect x="2.500" y="2" width="55" height="53" rx="12" fill="#f4f4f4"/><path d="M8.500 21V13Q8.500 8.500 13 8.500H21M39 8.500H47Q51.500 8.500 51.500 13V21M51.500 38V47Q51.500 51 47 51H39M21 51H13Q8.500 51 8.500 47V38" fill="none" stroke="#4a4a4a" stroke-width="3.400"/><path d="M18 24H24L26 20.500H34L36 24H42.500V39.500H17.500V24Z" fill="#464646"/><circle cx="30" cy="30.500" r="5" fill="none" stroke="#f4f4f4" stroke-width="1.500"/>`,
vs: `<path d="M30-4.500Q32-5.500 34-4.500L59.500 5Q62 6.500 62 9V50Q62 53 59.500 54.500L34 63.500Q30 65 26 63.500L0 54Q-2 52.500-2 50V9Q-2 6.500 0 5Z" fill="#8d55c6"/><path d="M30-1L57.500 8.500V51.500L30 60.500L2.500 51V8.500Z" fill="#fff"/><path d="M7 18L13 15L42 42V52L36 50Z" fill="#9a5fd4"/><path d="M42 6L52 11V47L42 52Z" fill="#b283ea"/><path d="M42 6V19L13 45L7 42V18L13 15V36Z" fill="#6c35ad"/><path d="M13 15L42 42V52L7 20Z" fill="#8c4fcb"/>`,
news: `${tile('#fff')}<defs>${lg('n','#f05a70','#e8435a')}</defs><rect x="12.500" y="12.500" width="35.500" height="35" fill="url(#n)"/><path d="M27 12.500H34L48 33V38.500ZM12.500 21L33 47.500H26.500L12.500 27.500Z" fill="#fff"/><path d="M34 12.500H38L48 27V33ZM12.500 27.500V33L22.500 47.500H27Z" fill="#fff"/><path d="M12.500 12.500H24L48 47.500H36L12.500 16Z" fill="#ee4e64"/>`,
vscode: `${tile('#fff')}<path d="M40 8.500L50 13V47L40 51.500Z" fill="#4a9bea"/><path d="M10 37L40 8.500V21L14 42L9.500 39.500Q8.500 38.500 10 37Z" fill="#2763a8"/><path d="M10 23L40 51.500V39L14 18.500L9.500 21Q8.500 22 10 23Z" fill="#3479c8"/>`,
textedit: `${tile('#fdfdfd','#ececec')}<path d="M0 16H60M0 23H60M0 30.500H60M0 37.500H60M0 45H60M0 52H60" stroke="#c5c7c8" stroke-width="1.200"/><path d="M10.500 0V60" stroke="#eebdb5" stroke-width="1"/><path d="M23.500 61.500L26.500 50L51-3Q54-8 57-4.500L56 1L32 52Z" fill="#a5bccc" stroke="#596873" stroke-width="1"/><path d="M30 48L54-3" stroke="#e4eef4" stroke-width="1.600"/><path d="M56 3L46 25" fill="none" stroke="#6e7f8b" stroke-width="1.500"/>`,
stickies: `<defs>${lg('t','#fcf09c','#ece283')}</defs><rect y="8" width="60" height="52" rx="13" fill="#d2bf5e"/><rect y="4" width="60" height="52" rx="13" fill="#b9a44a"/><path d="M13 0H47Q60 0 60 13V34C54 36 50 54 42 54H13Q0 54 0 41V13Q0 0 13 0Z" fill="url(#t)"/><path d="M60 34C52 46 50 54 40 54C50 49 52 38 60 34Z" fill="#f6eda5"/><path d="M11 20C12 8 14 8 14.500 19C19 13 21 13 22 20C25 13 27 17 29 18.500H50" fill="none" stroke="#d6c36a" stroke-width="2.500"/><path d="M10 29H50M10 39.500H31" stroke="#d6c36a" stroke-width="3.500"/>`,
books: `${tile('#f2a23b','#ea7733')}<path d="M29 16C26 12.500 14 12.500 10 16V45C14 42 26 42 29 45.500ZM31 16C34 12.500 46 12.500 50 16V45C46 42 34 42 31 45.500Z" fill="#f5f3f1"/>`,
xcode: `${tile('#55b8f2','#2c5fda')}${xgrid}<path d="M43 25L49 28L30 60Q28 64 23.500 62.500Q18.500 61 20.500 56Z" fill="#2c2e36"/><path d="M46 11L54 14L48.500 29L42 26Z" fill="#71757e"/><path d="M34-3C44-7 55-5 59 0L60 4L65 3L67 6L64 14L59 12L58 8L54 16L45 12C48 5 43-1 34-1Z" fill="#3b3d45" stroke="#8a8d94" stroke-width=".8"/>`,
simulator: `${tile('#55b8f2','#2c5fda')}${xgrid}<path d="M43 15.500Q45 13.500 47.500 15L61 23Q63 25 62 27L42 61Q40 64 37 62L25 54Q23 52 24 50Z" fill="#111214"/><path d="M35.500 27L46 46.500M42 37.500H50" stroke="#d3d5d8" stroke-width="4.500" stroke-linecap="round"/>`,
preview: `${tile('#f7f6f4','#eceae7')}<defs><clipPath id="q"><rect x="4.500" y="5" width="51" height="50" rx="10"/></clipPath></defs><g clip-path="url(#q)"><path d="M0 0H60V33H0Z" fill="#9dbdf0"/><path d="M0 32H60V60H0Z" fill="#2d558f"/><path d="M0 40Q14 38 24 43T40 45V60H0Z" fill="#4c4a46"/><path d="M0 46Q12 48 30 50V60H0Z" fill="#e9ecef"/></g><path d="M31 31Q31 28 35 28H52Q57 28 57 31V42H31Z" fill="#131416"/><path d="M33 42H55L61 58Q61 63 56 63H32Q26 63 27 58Z" fill="#d5dcde" opacity=".95"/><path d="M37 48l4-1 2 3-4 3zM44 53l4-2 1 3-4 3zM36 55l3-1 1 3-3 1z" fill="#6d7f96"/>`,
chromephone: `${tile('#f7f7f7','#efeeec')}${chromeDisc}<circle cx="55" cy="7" r="14" fill="#d4d4d2"/><rect x="50" y="-1.500" width="10.500" height="17" rx="2" fill="#222"/><rect x="51.500" y="1" width="7.500" height="12" fill="#c9c9c9"/>`
};
make('dock-app', el => `<style>${BASE}:host{display:flex;flex-direction:column;align-items:center;width:var(--step,78.360px);flex:none}
i{width:8px;height:8px;border-radius:50%;background:#a6a7a8;margin:9px 0 0 -1px}</style><svg width="60" height="60" viewBox="0 0 60 60">${icons[at(el,'icon')]}</svg>${el.hasAttribute('running') ? '<i></i>' : ''}`);

const apps = 'finder* launch messages* chrome* mail maps photos calendar contacts facetime reminders notes music keynote podcasts numbers pages* terminal appstore settings* slack* spotify* screenshot vs news vscode textedit* stickies* books*'.split(' ');
const side = 'xcode* simulator* preview* chromephone'.split(' ');
const app = n => `<dock-app icon="${n.replace('*','')}" ${n.endsWith('*') ? 'running' : ''}></dock-app>`;
make('mac-dock', `<style>${BASE}
:host{position:absolute;left:60px;top:1858px;width:2904px;height:97px;z-index:1}
.face{position:absolute;left:2892px;top:27px}
.d{position:relative;display:flex;height:97px;padding:13px 0 0 4px;border:2px solid #505153;border-radius:30px;background:linear-gradient(90deg,#2c3034 0,#2b2e31 560px,#27282a 640px,#28292b);box-shadow:0 0 0 1.500px #0a0a0a,0 0 44px #0007}
.sep{width:2px;height:72px;background:#58595b;margin-top:-3px;flex:none}.g{display:flex;--step:78px}
.th{margin:8px 0 0 8px;flex:none}</style>
<svg class="face" width="38" height="38" viewBox="0 0 38 38"><circle cx="19" cy="19" r="19" fill="#8f8f8f"/><ellipse cx="14" cy="14.500" rx="2.200" ry="3.200" fill="#1d1d1d"/><ellipse cx="25" cy="14.500" rx="2.200" ry="3.200" fill="#1d1d1d"/><path d="M9 22.500H31C30 29 25 33 20 33S10 29 9 22.500Z" fill="#1d1d1d"/><path d="M11.500 24.500H28.500L27 27H13Z" fill="#a5a5a5"/></svg>
<div class="d">${apps.map(app).join('')}<div class="sep" style="margin-left:18px"></div><div class="g" style="margin-left:16px">${side.map(app).join('')}</div><div class="sep" style="margin-left:18px"></div>
<svg class="th" style="margin-left:20px" width="70" height="44" viewBox="0 0 70 44"><path d="M0 0H70V44H0Z" fill="#f5f6f8"/><path d="M0 0H70V6H0Z" fill="#31343a"/><path d="M0 6H3V44H0Z" fill="#5d86c9"/><path d="M13 8H33M13 10.500H52M13 15H24M13 33H30M20 40H48M58 9H67M58 12H68M58 15H67" stroke="#9ba2ab" stroke-width="1"/><path d="M30 17H38V19H30Z" fill="#4f9be0"/><path d="M13 27H55V29.500H13Z" fill="#f4d9d7"/><path d="M13 34H18V35.500H13Z" fill="#c33"/><path d="M22 23H48" stroke="#bbb"/><g transform="translate(46 34) scale(.365)"><rect width="60" height="60" rx="14" fill="#f5f5f5"/>${chromeDisc}</g></svg>
<svg class="th" width="70" height="44" viewBox="0 0 70 44"><path d="M0 0H70V44H0Z" fill="#111212"/><g transform="translate(45 32) scale(.4)"><circle cx="30" cy="30" r="29" fill="#66d470"/>${spot} stroke-width="5"/></g></svg>
<svg style="margin:-3px 0 0 18px" width="54" height="66" viewBox="0 0 54 66"><defs><linearGradient id="b"><stop stop-color="#8b8f92"/><stop offset=".3" stop-color="#55595c"/><stop offset=".7" stop-color="#4a4e51"/><stop offset="1" stop-color="#7f8386"/></linearGradient><radialGradient id="bb" cx=".25" cy="1" r=".5"><stop stop-color="#b9bcbe" stop-opacity=".8"/><stop offset="1" stop-color="#aaa" stop-opacity="0"/></radialGradient></defs><path d="M.5 6L7 58Q9 65.500 27 65.500T47 58L53.500 6Z" fill="url(#b)"/><path d="M.5 6L7 58Q9 65.500 27 65.500T47 58L53.500 6Z" fill="url(#bb)"/><ellipse cx="27" cy="6" rx="26.500" ry="5.500" fill="#3f4346" stroke="#8d9194" stroke-width="1.200"/></svg></div>`);

runs.forEach(fitRun);
</script>
</body>
</html>
